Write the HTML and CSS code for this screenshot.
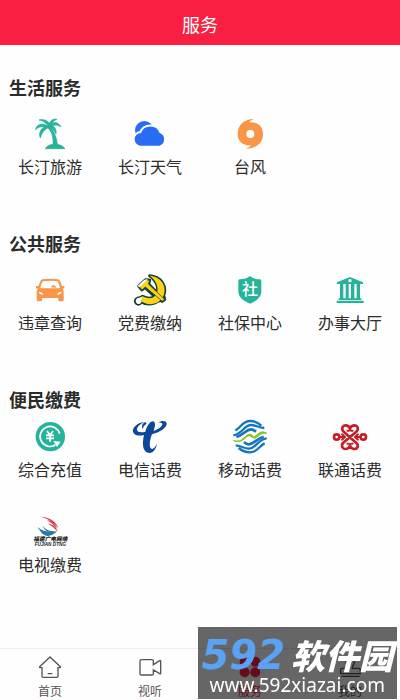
FILE: index.html
```html
<!DOCTYPE html>
<html lang="zh-CN">
<head>
<meta charset="utf-8">
<meta name="viewport" content="width=device-width, initial-scale=1">
<title>服务</title>
<link rel="stylesheet" href="styles.css">
</head>
<body>
<header class="topbar"><h1>服务</h1></header>
<main class="content">
  <section class="group">
    <h2>生活服务</h2>
    <div class="grid">
      <a class="item" href="#">
        <svg class="icon" viewBox="0 0 108 108" fill="#25b39b"><path d="M48 30C39 17 30 14 21 12C30 9 44 11 52 22C57 10 68 8 75 10C68 12 62 17 60 22C72 16 82 23 87 33C77 27 69 26 62 29C70 34 74 43 72 54C67 45 62 39 57 36C68 50 75 68 76 85Q92 87 99 98H40Q45 87 63 85C65 65 59 46 48 36C38 40 29 50 25 66C19 52 26 40 36 33C27 30 18 34 11 41C12 27 28 19 48 30Z" stroke="#25b39b" stroke-width="2"/></svg>
        <span>长汀旅游</span>
      </a>
      <a class="item" href="#">
        <svg class="icon" viewBox="0 0 108 108"><circle cx="37" cy="43" r="28" fill="#286cf4"/><path d="M27 89A19 19 0 0 1 27 51A30 30 0 0 1 83 51A20 20 0 0 1 82 89Z" fill="#286cf4" stroke="#fff" stroke-width="12" stroke-linejoin="round"/><path d="M27 89A19 19 0 0 1 27 51A30 30 0 0 1 83 51A20 20 0 0 1 82 89Z" fill="#286cf4"/></svg>
        <span>长汀天气</span>
      </a>
      <a class="item" href="#">
        <svg class="icon" viewBox="0 0 108 108" fill="#fa9447"><path fill-rule="evenodd" d="M66 9C35 10 17 27 17 54C17 77 34 90 58 88Q52 95 42 98C73 97 93 81 93 54C93 30 75 17 51 19Q57 12 66 9ZM55 42A12 12 0 1 1 55 66A12 12 0 1 1 55 42Z"/></svg>
        <span>台风</span>
      </a>
    </div>
  </section>
  <section class="group">
    <h2>公共服务</h2>
    <div class="grid">
      <a class="item" href="#">
        <svg class="icon" viewBox="0 0 108 108" fill="#fa9447"><path fill-rule="evenodd" d="M30 22Q54 19 78 22Q83 23 86 31L90 43L97 42V49L92 50Q95 54 95 60V84Q95 88 90 88H83Q79 88 79 84V78H30V84Q30 88 25 88H19Q14 88 14 84V60Q14 54 18 50L12 49V42L19 43L24 31Q26 23 30 22ZM32 28Q26 39 25 49H84Q82 37 77 28Q54 25 32 28ZM20 59Q22 68 34 68Q33 61 20 59ZM89 59Q76 61 75 68Q87 68 89 59Z"/><path d="M56 46Q60 38 67 40Q73 42 73 47Z"/></svg>
        <span>违章查询</span>
      </a>
      <a class="item" href="#">
        <svg class="icon" viewBox="0 0 108 108"><g stroke="#123d3c" stroke-width="9" stroke-linejoin="round" fill="#123d3c"><path d="M53 11C86 13 106 42 95 70L98 82L91 88L83 84C65 100 42 99 28 89A9 9 0 1 1 16 79Q25 78 32 73Q56 85 69 72C84 56 77 28 53 11Z"/><path d="M20 42L41 23L53 25L50 36L91 79L82 87L39 46L30 54Z"/></g><path d="M16 79Q25 78 32 73L29 88A9 9 0 1 1 16 79Z" fill="#fff"/><path d="M53 11C86 13 106 42 95 70C82 100 48 103 26 87L32 73Q56 85 69 72C84 56 77 28 53 11Z" fill="#fcd217"/><path d="M20 42L41 23L53 25L49 36L98 82L91 88L40 45L30 54Z" fill="#fcd217" stroke="#123d3c" stroke-width="2"/><path d="M17 42L37 23L48 21L39 30L22 46Z" fill="#fff"/></svg>
        <span>党费缴纳</span>
      </a>
      <a class="item" href="#">
        <svg class="icon" viewBox="0 0 108 108"><path d="M54 12Q64 22 84 22Q88 22 88 27V61Q86 82 54 95Q21 82 19 61V27Q19 22 23 22Q42 22 54 12Z" fill="#25b39b"/><text class="shield-text" x="54" y="70" text-anchor="middle">社</text></svg>
        <span>社保中心</span>
      </a>
      <a class="item" href="#">
        <svg class="icon" viewBox="0 0 108 108" fill="#25b39b"><path fill-rule="evenodd" d="M54 15L93 31V36H15V31ZM54 21A5 5 0 1 0 54 31A5 5 0 1 0 54 21Z"/><path d="M24 36H34V79H24ZM41 36H50V79H41ZM57 36H67V79H57ZM74 36H84V79H74ZM20 79H88V84H20ZM14 86H95V93H14Z"/></svg>
        <span>办事大厅</span>
      </a>
    </div>
  </section>
  <section class="group group-compact">
    <h2>便民缴费</h2>
    <div class="grid">
      <a class="item" href="#">
        <svg class="icon" viewBox="0 0 108 108" fill="none"><circle cx="55" cy="53" r="44" fill="#25b39b"/><path d="M83 44A30 30 0 1 0 70 78" stroke="#fff" stroke-width="5"/><path d="M64 66L86 68L75 84Z" fill="#fff"/><path d="M45 36L54 48L63 36M54 48V68M42 49H66M42 58H66" stroke="#fff" stroke-width="5"/></svg>
        <span>综合充值</span>
      </a>
      <a class="item" href="#">
        <svg class="icon" viewBox="0 0 108 108" fill="#0b489b"><path d="M37 8C14 12 0 27 3 38C6 50 22 52 36 48C32 66 31 84 38 94C46 106 62 103 68 92C72 86 74 81 74 74C70 86 62 93 56 88C51 80 54 60 60 46C86 40 106 24 104 13C102 4 88 4 78 11C88 9 94 13 90 19C86 26 76 32 65 36C68 25 72 13 66 8C58 3 45 17 40 38C27 41 17 40 15 33C13 25 24 15 37 8Z"/><path d="M40 9C31 12 28 22 32 30Q35 18 44 14Z"/></svg>
        <span>电信话费</span>
      </a>
      <a class="item" href="#">
        <svg class="icon" viewBox="0 0 108 108" fill="none" stroke-width="7"><g stroke="#1477bd"><path d="M10 34C24 29 31 6 54 6C68 6 80 12 88 20"/><path d="M4 49C31 46 36 18 57 18C72 18 82 27 97 27"/><path d="M13 54C36 48 42 30 59 31Q65 32 72 38" stroke-width="8"/><path d="M98 73C84 78 77 100 54 100C40 100 28 94 20 87"/><path d="M104 58C77 61 72 89 51 89C36 89 26 80 11 79"/><path d="M95 53C72 59 66 77 49 76Q43 75 36 69" stroke-width="8"/></g><path d="M4 64C17 70 27 67 38 56C45 49 50 44 57 47Q62 50 68 57C78 54 84 38 104 43C88 32 78 45 70 52Q64 59 57 52C49 44 40 56 34 61C25 69 17 71 4 64Z" fill="#8fc52a" stroke="#8fc52a" stroke-width="4"/></svg>
        <span>移动话费</span>
      </a>
      <a class="item" href="#">
        <svg class="icon" viewBox="0 0 108 108" fill="none" stroke="#c51d26" stroke-width="8" stroke-linecap="round" stroke-linejoin="round"><path d="M33 72L73 38C82 29 76 18 66 19Q57 20 54 29Q51 20 42 19C32 18 26 29 35 38L73 72C82 80 76 91 66 90Q57 89 54 80Q51 89 42 90C32 91 26 80 33 72"/><path d="M54 29Q54 36 46 35M54 29Q54 36 62 35M54 80Q54 73 46 74M54 80Q54 73 62 74" stroke-width="6"/><circle cx="14" cy="54" r="8"/><circle cx="94" cy="54" r="8"/><path d="M22 54H32M86 54H76M30 46L39 54L30 62M78 46L69 54L78 62" stroke-width="6"/></svg>
        <span>联通话费</span>
      </a>
      <a class="item" href="#">
        <svg class="icon" viewBox="0 0 108 108"><g fill="#d53b4b"><path d="M27 8C51 9 72 21 79 42Q58 16 27 8Z"/><path d="M45 18Q66 20 77 46Q62 28 45 18Z"/><path d="M48 29C65 31 73 39 77 53Q64 37 48 29Z"/></g><g fill="#287aaa"><path d="M17 39Q35 57 75 53C52 69 28 62 17 39Z"/><path d="M24 50Q42 61 73 52C56 73 35 68 24 50Z"/><path d="M32 35C41 48 56 53 74 51C57 58 39 55 32 35Z"/></g><text class="tv-name" x="55" y="82" text-anchor="middle">福建广电网络</text><text class="tv-latin" x="55" y="96" text-anchor="middle">FUJIAN DTNG</text></svg>
        <span>电视缴费</span>
      </a>
    </div>
  </section>
</main>
<nav class="tabbar">
  <a class="tab" href="#">
    <svg viewBox="0 0 72 72"><path d="M36 6L5 35Q4 38 8 38H12V64Q12 67 15 67H57Q60 67 60 64V38H65Q69 38 67 35ZM29 56H43"/></svg>
    <span>首页</span>
  </a>
  <a class="tab" href="#">
    <svg viewBox="0 0 72 72"><path d="M10 14H42Q46 14 46 18V29L65 17Q68 15 68 19V54Q68 58 65 56L46 45V56Q46 60 42 60H10Q6 60 6 56V18Q6 14 10 14Z"/></svg>
    <span>视听</span>
  </a>
  <a class="tab tab-active" href="#">
    <svg viewBox="0 0 72 72"><circle cx="20" cy="20" r="15"/><circle cx="52" cy="20" r="15"/><circle cx="20" cy="52" r="15"/><circle cx="52" cy="52" r="15"/></svg>
    <span>服务</span>
  </a>
  <a class="tab" href="#">
    <svg viewBox="0 0 72 72"><path d="M30 40C31 31 23 28 24 19C25 6 48 6 49 19C50 28 42 31 43 40H62Q67 40 67 45V56H8V45Q8 40 13 40ZM10 64H65"/></svg>
    <span>我的</span>
  </a>
</nav>
<aside class="watermark">
  <div class="brand"><span class="brand-number">592</span><span class="brand-name">软件园</span></div>
  <div class="site">www.592xiazai.com</div>
</aside>
</body>
</html>
```
FILE: styles.css
```css
* {
  box-sizing: border-box;
}

body {
  margin: 0;
  min-height: 100vh;
  display: flex;
  flex-direction: column;
  background: #fefefe;
  color: #2b2b2b;
  font-family: "Noto Sans CJK SC", sans-serif;
}

a {
  color: inherit;
  text-decoration: none;
}

.topbar {
  padding: 12px 0 9px;
  background: #f91f43;
  color: #fff;
  text-align: center;
}

.topbar h1 {
  margin: 0;
  font-size: 18px;
  line-height: 24px;
  font-weight: 400;
}

.content {
  flex: 1;
  display: flex;
  flex-direction: column;
  gap: 53px;
  padding: 30px 0 20px;
}

.group {
  display: flex;
  flex-direction: column;
  gap: 17px;
}

.group-compact {
  gap: 8px;
}

.group h2 {
  margin: 0;
  padding: 0 9px;
  font-size: 18px;
  line-height: 24px;
  font-weight: 700;
}

.grid {
  display: grid;
  grid-template-columns: repeat(4, 1fr);
  row-gap: 33px;
}

.item {
  display: flex;
  flex-direction: column;
  align-items: center;
  gap: 2px;
  font-size: 16px;
  line-height: 24px;
}

.icon {
  width: 36px;
  height: 36px;
}

.shield-text {
  font-size: 48px;
  font-weight: 500;
  fill: #fff;
}

.tv-name {
  font-size: 17px;
  font-weight: 900;
  font-style: italic;
  fill: #222;
}

.tv-latin {
  font: italic 700 14px "Liberation Sans", sans-serif;
  fill: #222;
}

.tabbar {
  position: sticky;
  bottom: 0;
  display: grid;
  grid-template-columns: repeat(4, 1fr);
  padding: 6px 0 0;
  border-top: 1px solid #e9eeee;
  background: #fefefe;
  color: #555;
}

.tab {
  display: flex;
  flex-direction: column;
  align-items: center;
  gap: 3px;
  font-size: 12px;
  line-height: 18px;
}

.tab svg {
  width: 24px;
  height: 24px;
  fill: none;
  stroke: currentColor;
  stroke-width: 4;
}

.tab-active {
  color: #f91f43;
}

.tab-active svg {
  fill: currentColor;
  stroke: none;
}

.watermark {
  position: fixed;
  right: 3px;
  bottom: 1px;
  padding: 10px 4px 2px;
  background: rgba(0, 0, 0, 0.6);
  color: #fff;
  pointer-events: none;
}

.brand {
  display: flex;
  align-items: center;
  justify-content: center;
  gap: 6px;
  height: 36px;
  font-style: italic;
  font-weight: 700;
}

.brand-number {
  font-family: "DejaVu Sans", sans-serif;
  font-size: 40px;
  line-height: 36px;
  color: #5aa2f6;
}

.brand-name {
  font-size: 34px;
  line-height: 36px;
  font-weight: 900;
}

.site {
  font-family: "Noto Sans", sans-serif;
  font-size: 19px;
  line-height: 24px;
  text-align: center;
}
```
